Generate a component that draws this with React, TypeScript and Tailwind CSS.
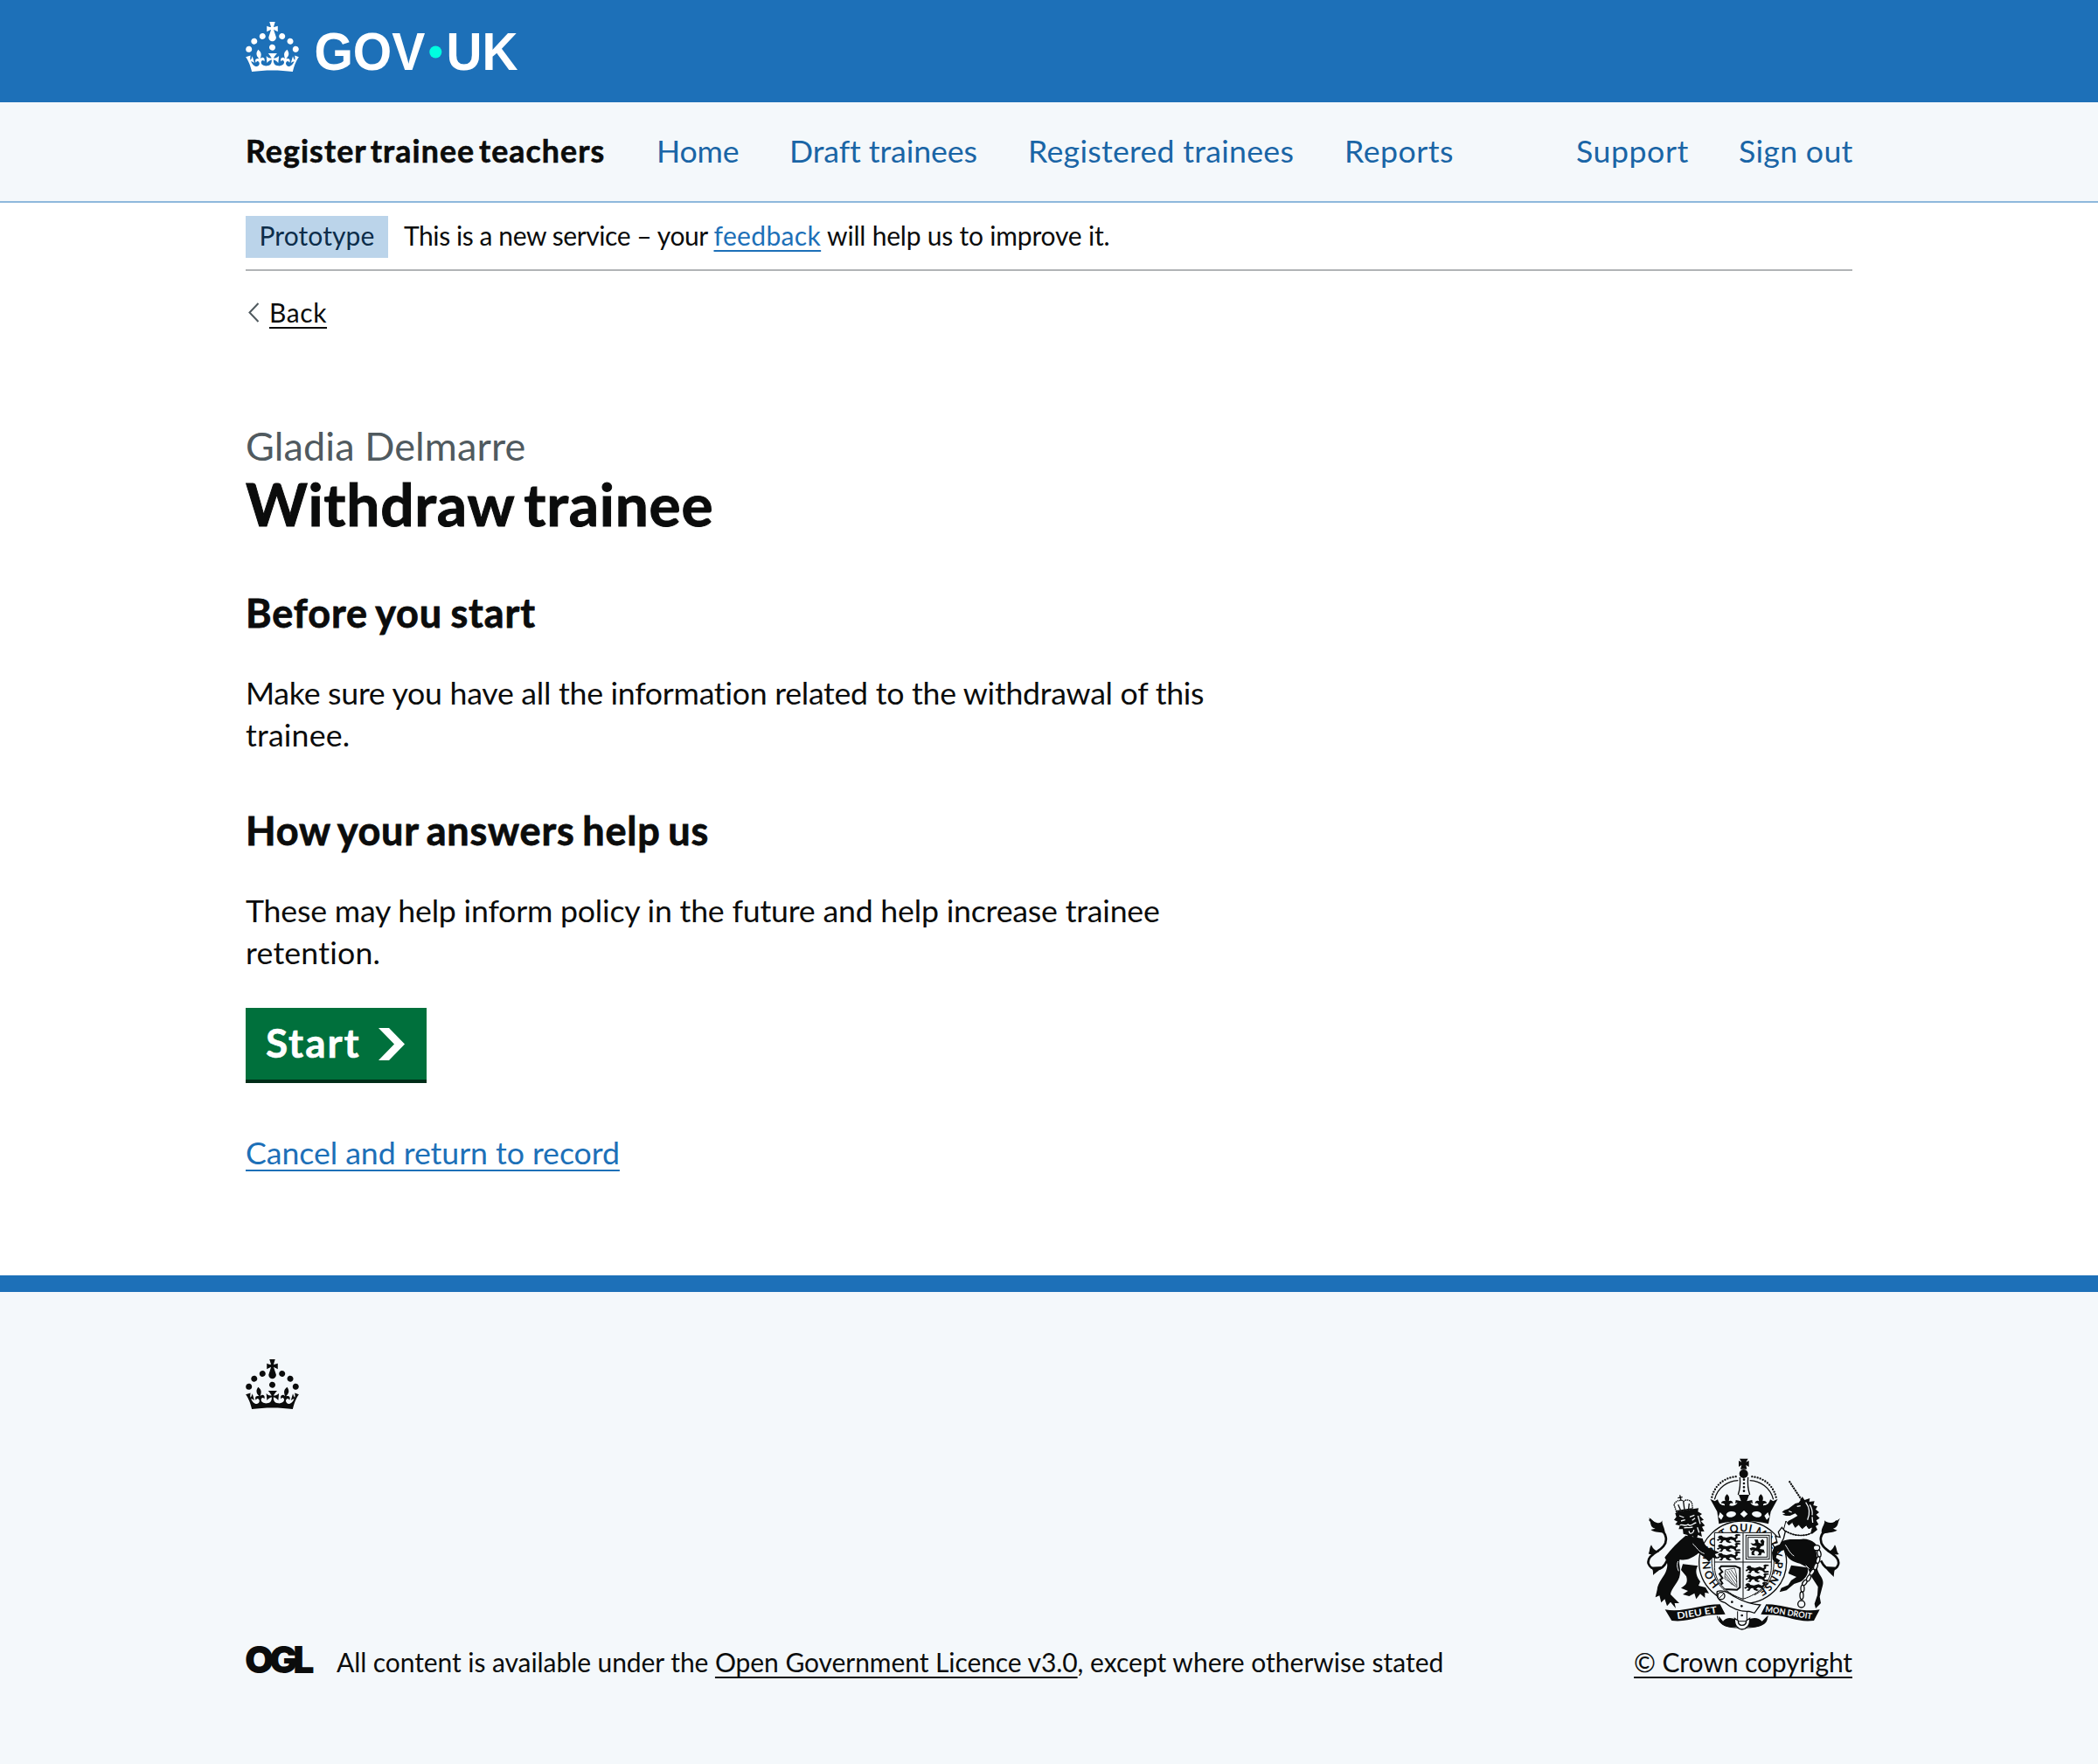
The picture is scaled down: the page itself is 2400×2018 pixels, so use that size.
import type { ReactNode } from "react";

const INK = "#0b0c0c";
const PAPER = "#f4f8fb";

function Crown() {
  return (
    <svg viewBox="0 0 32 30" className="block h-[57px] w-[61px] shrink-0" fill="currentColor" aria-hidden="true">
      <path d="M22.6 10.4c-1 .4-2-.1-2.4-1-.4-.9.1-2 1-2.4.9-.4 2 .1 2.4 1s-.1 2-1 2.4m-5.9 6.7c-.9.4-2-.1-2.4-1-.4-.9.1-2 1-2.4.9-.4 2 .1 2.4 1s-.1 2-1 2.4m10.8-3.7c-1 .4-2-.1-2.4-1-.4-.9.1-2 1-2.4.9-.4 2 .1 2.4 1s0 2-1 2.4m3.3 4.8c-1 .4-2-.1-2.4-1-.4-.9.1-2 1-2.4.9-.4 2 .1 2.4 1s-.1 2-1 2.4M17 4.7l2.3 1.2V2.5l-2.3.7-.2-.2.9-3h-3.4l.9 3-.2.2c-.1.1-2.3-.7-2.3-.7v3.4L15 4.7c.1.1.1.2.2.2l-1.3 4c-.1.2-.1.4-.1.6 0 1.1.8 2 1.9 2.2h.7c1-.2 1.9-1.1 1.9-2.1 0-.2 0-.4-.1-.6l-1.3-4c-.1-.2 0-.2.1-.3m-7.6 5.7c.9.4 2-.1 2.4-1 .4-.9-.1-2-1-2.4-.9-.4-2 .1-2.4 1s0 2 1 2.4m-5 3c.9.4 2-.1 2.4-1 .4-.9-.1-2-1-2.4-.9-.4-2 .1-2.4 1s.1 2 1 2.4m-3.2 4.8c.9.4 2-.1 2.4-1 .4-.9-.1-2-1-2.4-.9-.4-2 .1-2.4 1s0 2 1 2.4m14.8 11c4.4 0 8.6.3 12.3.8 1.1-4.5 2.4-7 3.7-8.8l-2.5-.9c.2 1.3.3 1.9 0 2.7-.4-.4-.8-1.1-1.1-2.3l-1.2 4c.7-.5 1.3-.8 2-.9-1.1 2.5-2.6 3.1-3.5 3-1.1-.2-1.7-1.2-1.5-2.1.3-1.2 1.5-1.5 2.1-.1 1.1-2.3-.8-3-2-2.3 1.9-1.9 2.1-3.5.6-5.6-2.1 1.6-2.1 3.2-1.2 5.5-1.2-1.4-3.2-.6-2.5 1.6.9-1.4 2.1-.5 1.9.8-.2 1.1-1.7 2.1-3.5 1.9-2.7-.2-2.9-2.1-2.9-3.6.7-.1 1.9.5 2.9 1.9l.4-4.3c-1.1 1.1-2.1 1.4-3.2 1.4.4-1.2 2.1-3 2.1-3h-5.4s1.7 1.9 2.1 3c-1.1 0-2.1-.2-3.2-1.4l.4 4.3c1-1.4 2.2-2 2.9-1.9-.1 1.5-.2 3.4-2.9 3.6-1.9.2-3.4-.8-3.5-1.9-.2-1.3 1-2.2 1.9-.8.7-2.3-1.2-3-2.5-1.6.9-2.2.9-3.9-1.2-5.5-1.5 2-1.3 3.7.6 5.6-1.2-.7-3.1 0-2 2.3.6-1.4 1.8-1.1 2.1.1.2.9-.3 1.9-1.5 2.1-.9.2-2.4-.5-3.5-3 .6 0 1.2.3 2 .9l-1.2-4c-.3 1.1-.7 1.9-1.1 2.3-.3-.8-.2-1.4 0-2.7l-2.9.9C1.3 23 2.6 25.5 3.7 30c3.7-.5 7.9-.8 12.3-.8" />
    </svg>
  );
}

function Wordmark() {
  return (
    <svg viewBox="0 -10 236 80" className="block h-[80px] w-[236px] font-['Liberation_Sans',sans-serif] text-[61px] font-bold" role="img" aria-label="GOV.UK">
      <text x="0.4" y="49" textLength="127" lengthAdjust="spacingAndGlyphs" fill="#fff">GOV</text>
      <circle cx="139.3" cy="28.5" r="7" fill="#00ffe0" />
      <text x="151.5" y="49" textLength="82" lengthAdjust="spacingAndGlyphs" fill="#fff">UK</text>
    </svg>
  );
}

function OglLogo() {
  return (
    <svg viewBox="0 -10 86 54" className="block h-[54px] w-[86px] font-['Inter',sans-serif] text-[43px] font-black tracking-[-5.3px]" fill={INK} role="img" aria-label="OGL">
      <text x="-1" y="32">OGL</text>
    </svg>
  );
}

/* One walking lion, as repeated in the English quarters of the shield. */
function Passant({ x, y }: { x: number; y: number }) {
  return (
    <path
      transform={`translate(${x} ${y})`}
      d="M0 6L6 0L14 0L18 5L30 7L46 3L58 8L62 4L58 -1L64 -5L76 -4L78 0L68 1L68 9L62 13L64 18L76 17L78 22L62 24L54 16L44 14L38 19L48 23L40 26L30 22L27 16L20 17L14 26L4 24L12 19L9 14L0 19L-3 14L6 11Z"
    />
  );
}

function RoyalArms() {
  return (
    <svg viewBox="0 0 690 630" className="block h-[210px] w-[230px]" fill={INK} aria-hidden="true">
      <defs>
        <path id="garter" d="M265 457A111 106 0 1 1 396 476" />
        <clipPath id="shield"><path d="M247 280H442V400C440 455 400 490 345 508C290 490 250 455 247 400Z" /></clipPath>
      </defs>

      {/* Garter */}
      <ellipse cx="344" cy="382" rx="150" ry="142" fill={PAPER} stroke={INK} strokeWidth="4" />
      <path d="M238 360C232 430 266 480 320 500M450 360C456 430 430 470 384 494" fill="none" stroke={INK} strokeWidth="3" />
      <text className="font-['Lato',sans-serif] text-[37px] font-bold">
        <textPath href="#garter" textLength="540" lengthAdjust="spacing">HONI SOIT QUI MAL Y PENSE</textPath>
      </text>

      {/* Shield */}
      <g clipPath="url(#shield)">
        <rect x="240" y="275" width="210" height="240" fill={PAPER} />
        <Passant x={258} y={290} />
        <Passant x={258} y={320} />
        <Passant x={258} y={350} />
        <Passant x={356} y={394} />
        <Passant x={356} y={424} />
        <Passant x={352} y={454} />
        <rect x="355" y="289" width="80" height="82" fill="none" stroke={INK} strokeWidth="3" />
        <rect x="362" y="296" width="66" height="68" fill="none" stroke={INK} strokeWidth="3" />
        <path d="M384 304L396 304L398 314L408 318L404 308L412 302L418 310L416 324L406 328L402 336L416 338L420 350L410 348L406 358L394 358L400 350L396 344L386 342L382 350L386 358L374 356L374 346L382 338L372 342L368 334L378 330L390 332L392 326L378 324L370 316L382 318L388 314Z" />
        <path d="M270 395H318L334 402V468L324 476L280 474L266 460L274 454L266 442L274 436L264 422L274 414L264 402Z" fill="none" stroke={INK} strokeWidth="6" />
        <path d="M284 408L316 402L322 424L324 468L282 438Z" fill="none" stroke={INK} strokeWidth="2" />
        <path d="M288 412L322 462M296 410L324 450M304 408L324 436M284 420L316 464M284 430L308 460" stroke={INK} strokeWidth="2" />
      </g>
      <path d="M247 280H442V400C440 455 400 490 345 508C290 490 250 455 247 400ZM345 280V508M247 381H442" fill="none" stroke={INK} strokeWidth="3" />

      {/* Crown */}
      <path d="M333 26H362L355 38L365 33V54L355 48L358 62H336L340 48L330 54V33L340 38Z" />
      <circle cx="347" cy="78" r="15" />
      <path d="M238 158C250 110 290 88 328 87M458 158C446 110 406 88 368 87" fill="none" stroke={INK} strokeWidth="7" strokeLinecap="round" strokeDasharray="0 9.6" />
      <path d="M247 166C258 124 292 103 328 101M449 166C438 124 404 103 368 101" fill="none" stroke={INK} strokeWidth="4" />
      <path d="M334 90C336 110 334 132 328 150M362 90C360 110 362 132 368 150" fill="none" stroke={INK} strokeWidth="4" />
      <path d="M348 98V150" stroke={INK} strokeWidth="8" strokeLinecap="round" strokeDasharray="0 13" />
      <path d="M232 164L248 172L258 166C262 180 268 186 282 187C284 180 276 178 270 180C270 170 280 170 284 172C280 160 284 154 290 148C296 154 300 160 296 172C302 168 310 172 310 180C304 176 298 180 298 187C310 190 322 186 326 176L318 180L320 168L338 172L330 150H366L358 172L376 168L378 180L370 176C374 186 386 190 398 187C398 180 392 176 386 180C386 172 394 168 400 172C396 160 400 154 406 148C412 154 416 160 412 172C416 170 426 170 426 180C420 178 412 180 414 187C428 186 434 180 438 166L448 172L464 164L440 208L432 250C380 236 316 236 262 250L256 208Z" />
      <ellipse cx="304" cy="217" rx="17" ry="10" fill={PAPER} transform="rotate(-8 304 217)" />
      <ellipse cx="392" cy="217" rx="17" ry="10" fill={PAPER} transform="rotate(8 392 217)" />
      <path d="M348 204L361 216L348 228L335 216ZM266 210L278 222L270 236L260 226ZM430 210L418 222L426 236L436 226Z" fill={PAPER} />

      {/* Lion */}
      <path d="M84 376C64 420 28 408 20 386C12 348 88 344 80 296C76 272 54 266 24 234" fill="none" stroke={INK} strokeWidth="8" />
      <path d="M22 228C30 246 24 262 44 266L28 270C44 282 62 276 76 284C80 268 64 250 68 238C60 256 38 244 22 228ZM20 352C26 344 22 334 30 322C36 338 48 344 58 346C40 352 30 358 20 352ZM24 398C38 402 36 416 36 426C46 416 60 410 66 396Z" />
      <path d="M148 290C120 312 95 340 76 365C84 378 88 390 82 408C76 430 52 450 50 476L44 502L58 496L64 520L76 508L84 532L96 518L114 540L110 522L126 522L96 492C98 470 125 450 128 425C132 400 122 384 128 372C150 378 175 365 192 350L214 366L228 380L240 366L258 370L248 354L264 348L240 338C215 330 212 318 206 300Z" />
      <path d="M138 388L190 394C178 410 186 434 198 448L192 462L216 468L228 488L214 486L214 504L198 490L184 508L178 488L160 498L138 492L156 480L132 470C150 460 156 450 150 430L132 408Z" />
      <path d="M112 214L122 206L192 196L190 208L204 216L196 222L210 236L200 240L214 256L204 260L212 276L200 276L204 294L190 288L184 306L172 292L158 304L154 288L140 284L138 268L124 268L128 256L112 252L120 242L108 236L116 226Z" />
      <path d="M126 222L142 228M162 226L178 220M132 240L146 236M170 238L180 230M128 254C140 250 146 260 156 252C166 262 172 248 184 246M142 264C152 260 166 266 172 260M160 274C158 286 174 286 176 270M190 222L198 250M188 262L194 280" fill="none" stroke={PAPER} strokeWidth="4" />
      <path d="M116 208L108 184C114 168 134 166 142 172C150 164 168 168 170 182L172 200Z" fill={PAPER} stroke={INK} strokeWidth="4" strokeDasharray="5 2" />
      <path d="M116 206L170 198M140 172L144 202M122 184L130 202M160 180L158 198M128 151L132 170M121 161L137 158" stroke={INK} strokeWidth="4" />
      <path d="M172 318C186 330 192 346 212 352M122 378C116 392 120 402 124 412" fill="none" stroke={PAPER} strokeWidth="3" />

      {/* Unicorn */}
      <path d="M503 103L546 168" stroke={INK} strokeWidth="6" strokeDasharray="7 2" />
      <path d="M612 376C634 420 666 410 672 388C680 350 604 344 612 296C618 272 640 266 668 240" fill="none" stroke={INK} strokeWidth="8" />
      <path d="M678 230C666 248 676 258 654 266L668 272C650 282 632 278 616 286C608 266 628 252 624 238C640 254 664 244 678 230ZM674 354C664 344 668 334 660 322C652 338 646 344 634 346C652 352 662 358 674 354ZM668 398C656 402 658 420 656 432C646 420 632 412 626 396Z" />
      <path d="M478 210L486 203L500 198L524 180L536 177L544 166L548 156L556 168L574 162L572 174L590 172L586 186L600 190L594 200L606 210L596 218L608 230L596 238L604 252L594 258L600 270L582 284L490 262L500 240L516 232L532 222L524 214L506 222L492 222L480 218L490 214Z" />
      <path d="M530 190L542 188M502 206L512 210M560 176C572 192 576 214 566 236M574 184C582 198 584 208 582 220M582 226L584 246" fill="none" stroke={PAPER} strokeWidth="4" />
      <path d="M492 240L484 270C510 290 550 296 578 282L584 260L570 266L562 254L548 266L536 252L524 262L514 244L502 254Z" fill={PAPER} stroke={INK} strokeWidth="3" />
      <path d="M490 274C514 290 548 294 574 284" fill="none" stroke={INK} strokeWidth="5" strokeDasharray="6 3" />
      <path d="M470 316C490 298 520 304 548 302C578 300 606 320 610 352C612 380 592 392 602 412C610 432 624 440 618 462L608 500L612 522L594 540L590 524L600 494L602 466L580 432L566 400L540 386C510 380 490 362 486 340L464 346L458 366L472 376L462 388L446 372L444 348L452 328Z" />
      <path d="M478 262L466 278L472 296L456 292L462 314L446 318L452 330L472 322L484 300L490 276Z" fill={PAPER} stroke={INK} strokeWidth="4" />
      <path d="M510 392L566 400C572 420 560 436 544 448L520 456L494 478L470 484L476 470L500 460L510 444L528 432L500 420Z" />
      <path d="M490 322C500 336 504 350 520 360M560 392L572 404" fill="none" stroke={PAPER} strokeWidth="3" />
      <path d="M600 340L604 372L594 396L570 436L552 456" fill="none" stroke={PAPER} strokeWidth="9" />
      <g fill={PAPER} stroke={INK} strokeWidth="4">
        <ellipse cx="597" cy="332" rx="11" ry="9" />
        <ellipse cx="606" cy="352" rx="6" ry="12" transform="rotate(-10 606 352)" />
        <ellipse cx="602" cy="374" rx="6" ry="12" transform="rotate(14 602 374)" />
        <ellipse cx="594" cy="396" rx="6" ry="12" transform="rotate(20 594 396)" />
        <ellipse cx="582" cy="416" rx="6" ry="12" transform="rotate(34 582 416)" />
        <ellipse cx="570" cy="436" rx="6" ry="12" transform="rotate(26 570 436)" />
        <ellipse cx="556" cy="452" rx="6" ry="11" transform="rotate(36 556 452)" />
        <ellipse cx="549" cy="472" rx="6" ry="12" />
        <ellipse cx="546" cy="496" rx="6" ry="13" />
        <circle cx="545" cy="525" r="12" />
      </g>

      {/* Motto scroll */}
      <path d="M77 544C140 556 200 526 266 526L284 560L258 562C200 560 160 590 100 582Z" />
      <path d="M608 544C545 556 490 526 424 526L406 560L428 562C490 560 526 590 588 582Z" />
      <text transform="translate(120 577) rotate(-9)" textLength="138" lengthAdjust="spacingAndGlyphs" fill={PAPER} className="font-['Lato',sans-serif] text-[32px] font-bold">DIEU ET</text>
      <text transform="translate(420 552) rotate(9)" textLength="162" lengthAdjust="spacingAndGlyphs" fill={PAPER} className="font-['Lato',sans-serif] text-[29px] font-bold">MON DROIT</text>
      <path d="M262 566C256 596 290 608 322 604L320 580C306 568 284 572 276 584M428 566C434 596 396 608 362 604L364 580C378 568 400 572 410 584" />
      <path d="M256 566C260 590 280 604 320 606H364C404 604 424 590 430 566" fill="none" stroke={INK} strokeWidth="3" />

      {/* Belt */}
      <path d="M256 482C276 474 296 486 312 498C340 514 372 526 404 528L384 556L366 550C336 554 300 536 282 520C262 516 252 500 256 482Z" fill={PAPER} stroke={INK} strokeWidth="4" />
      <circle cx="270" cy="497" r="12" fill="none" stroke={INK} strokeWidth="4" />
      <path d="M264 504L278 490" stroke={INK} strokeWidth="3" />
      <circle cx="307" cy="518" r="4" />
      <circle cx="340" cy="532" r="4" />
      <path d="M326 550V584H358V552" fill={PAPER} stroke={INK} strokeWidth="3" />
      <circle cx="341" cy="564" r="4" />
      <path d="M316 574C314 600 330 612 341 612C354 612 370 600 368 574L356 582C356 594 350 598 341 598C332 598 328 594 328 582Z" fill={PAPER} stroke={INK} strokeWidth="4" />
    </svg>
  );
}

function TextLink({ className, children }: { className: string; children: ReactNode }) {
  return (
    <a href="#" className={`underline decoration-2 [text-decoration-skip-ink:none] ${className}`}>
      {children}
    </a>
  );
}

export default function App() {
  return (
    <div className="flex min-h-[2018px] flex-col bg-white font-['Lato',sans-serif] text-[#0b0c0c] antialiased">
      <header>
        <div className="h-[117px] bg-[#1d70b8] text-white">
          <div className="mx-auto flex w-[1838px] items-start gap-[17px] pt-[21px]">
            <div className="pt-1">
              <Crown />
            </div>
            <Wordmark />
          </div>
        </div>
        <div className="h-[115px] border-b-2 border-[#8eb8dc] bg-[#f4f8fb]">
          <nav className="mx-auto flex h-[111px] w-[1838px] items-center text-[35.7px] whitespace-nowrap text-[#1a65a6]">
            <a href="#" className="w-[470px] font-bold tracking-[1.1px] text-[#0b0c0c] [-webkit-text-stroke:0.6px] [word-spacing:-5px]">Register trainee teachers</a>
            <a href="#" className="w-[152px] tracking-[-0.2px]">Home</a>
            <a href="#" className="w-[273px] tracking-[-0.1px]">Draft trainees</a>
            <a href="#" className="w-[362px] tracking-[0.26px]">Registered trainees</a>
            <a href="#" className="tracking-[0.5px]">Reports</a>
            <a href="#" className="ml-auto w-[186px] tracking-[0.55px]">Support</a>
            <a href="#" className="w-[130px] tracking-[0.3px]">Sign out</a>
          </nav>
        </div>
      </header>

      <main className="mx-auto w-[1838px]">
        <div className="mt-[15px] flex h-[63px] items-start border-b-2 border-[#b1b4b6] text-[30px] leading-[45px] whitespace-nowrap">
          <strong className="mr-[18px] h-[48px] w-[163px] bg-[#bbd4ea] text-center font-normal tracking-[0.1px] text-[#0c2d4a]">Prototype</strong>
          <p>
            <span className="tracking-[-0.42px]">This is a new service – your </span>
            <TextLink className="tracking-[0.36px] text-[#1d70b8] underline-offset-[5px]">feedback</TextLink>
            <span className="tracking-[-0.2px]"> will help us to improve it.</span>
          </p>
        </div>

        <div className="mt-[28px] flex h-[38px] items-center text-[30px] leading-[38px]">
          <svg viewBox="0 0 14 24" className="mr-[11px] ml-[2px] h-[24px] w-[14px]" fill="none" stroke="#505a5f" strokeWidth="2" aria-hidden="true">
            <path d="M12.5 2L2.5 12.5L12.5 23" />
          </svg>
          <TextLink className="tracking-[0.6px] underline-offset-[5px]">Back</TextLink>
        </div>

        <div className="mt-[107px] w-[1160px]">
          <p className="text-[45px] leading-[54px] tracking-[0.1px] text-[#505a5f]">Gladia Delmarre</p>
          <h1 className="mt-[1px] text-[67.6px] leading-[76px] font-bold tracking-[0.75px] [-webkit-text-stroke:1px] [word-spacing:-6px]">Withdraw trainee</h1>

          <h2 className="mt-[60px] text-[45px] leading-[54px] font-bold tracking-[0.9px] [-webkit-text-stroke:0.8px] [word-spacing:-2.5px]">Before you start</h2>
          <p className="mt-[41px] text-[35.7px] leading-[48px]">
            <span className="tracking-[-0.27px]">Make sure you have all the information related to the withdrawal of this</span>
            <br />
            <span className="tracking-[0.2px]">trainee.</span>
          </p>

          <h2 className="mt-[58px] text-[45px] leading-[54px] font-bold tracking-[0.8px] [-webkit-text-stroke:0.8px] [word-spacing:-3px]">How your answers help us</h2>
          <p className="mt-[41px] text-[35.7px] leading-[48px]">
            <span className="tracking-[-0.2px]">These may help inform policy in the future and help increase trainee</span>
            <br />
            <span className="tracking-[0.2px]">retention.</span>
          </p>

          <button type="button" className="mt-[39px] flex h-[82px] w-[207px] items-center bg-[#00703c] pb-[2px] pl-[23px] text-[46px] leading-[54px] font-bold tracking-[1.9px] text-white shadow-[0_4px_0_#002d18] [-webkit-text-stroke:0.6px]">
            Start
            <svg viewBox="0 0 30 37" className="mt-[3px] mr-[25px] ml-auto h-[37px] w-[30px]" fill="currentColor" aria-hidden="true">
              <path d="M0 0H12L30 18.5L12 37H0L18 18.5Z" />
            </svg>
          </button>

          <p className="mt-[60px] text-[35.7px] leading-[48px]">
            <TextLink className="tracking-[-0.06px] text-[#1d70b8] underline-offset-[6px]">Cancel and return to record</TextLink>
          </p>
        </div>
      </main>

      <footer className="mt-[116px] flex-1 border-t-[19px] border-[#1d70b8] bg-[#f4f8fb]">
        <div className="mx-auto w-[1838px] pt-[77px]">
          <Crown />
          <div className="mt-[48px] flex items-end justify-between text-[30px] leading-[38px] whitespace-nowrap">
            <div className="flex h-[48px] items-start">
              <div className="mr-[18px] w-[86px]">
                <OglLogo />
              </div>
              <p className="pt-[10px]">
                <span className="tracking-[-0.07px]">All content is available under the </span>
                <TextLink className="tracking-[-0.07px] underline-offset-[5px]">Open Government Licence v3.0</TextLink>
                , except where otherwise stated
              </p>
            </div>
            <div className="flex flex-col items-center gap-[12px]">
              <RoyalArms />
              <TextLink className="tracking-[-0.1px] underline-offset-[5px]">© Crown copyright</TextLink>
            </div>
          </div>
        </div>
      </footer>
    </div>
  );
}
